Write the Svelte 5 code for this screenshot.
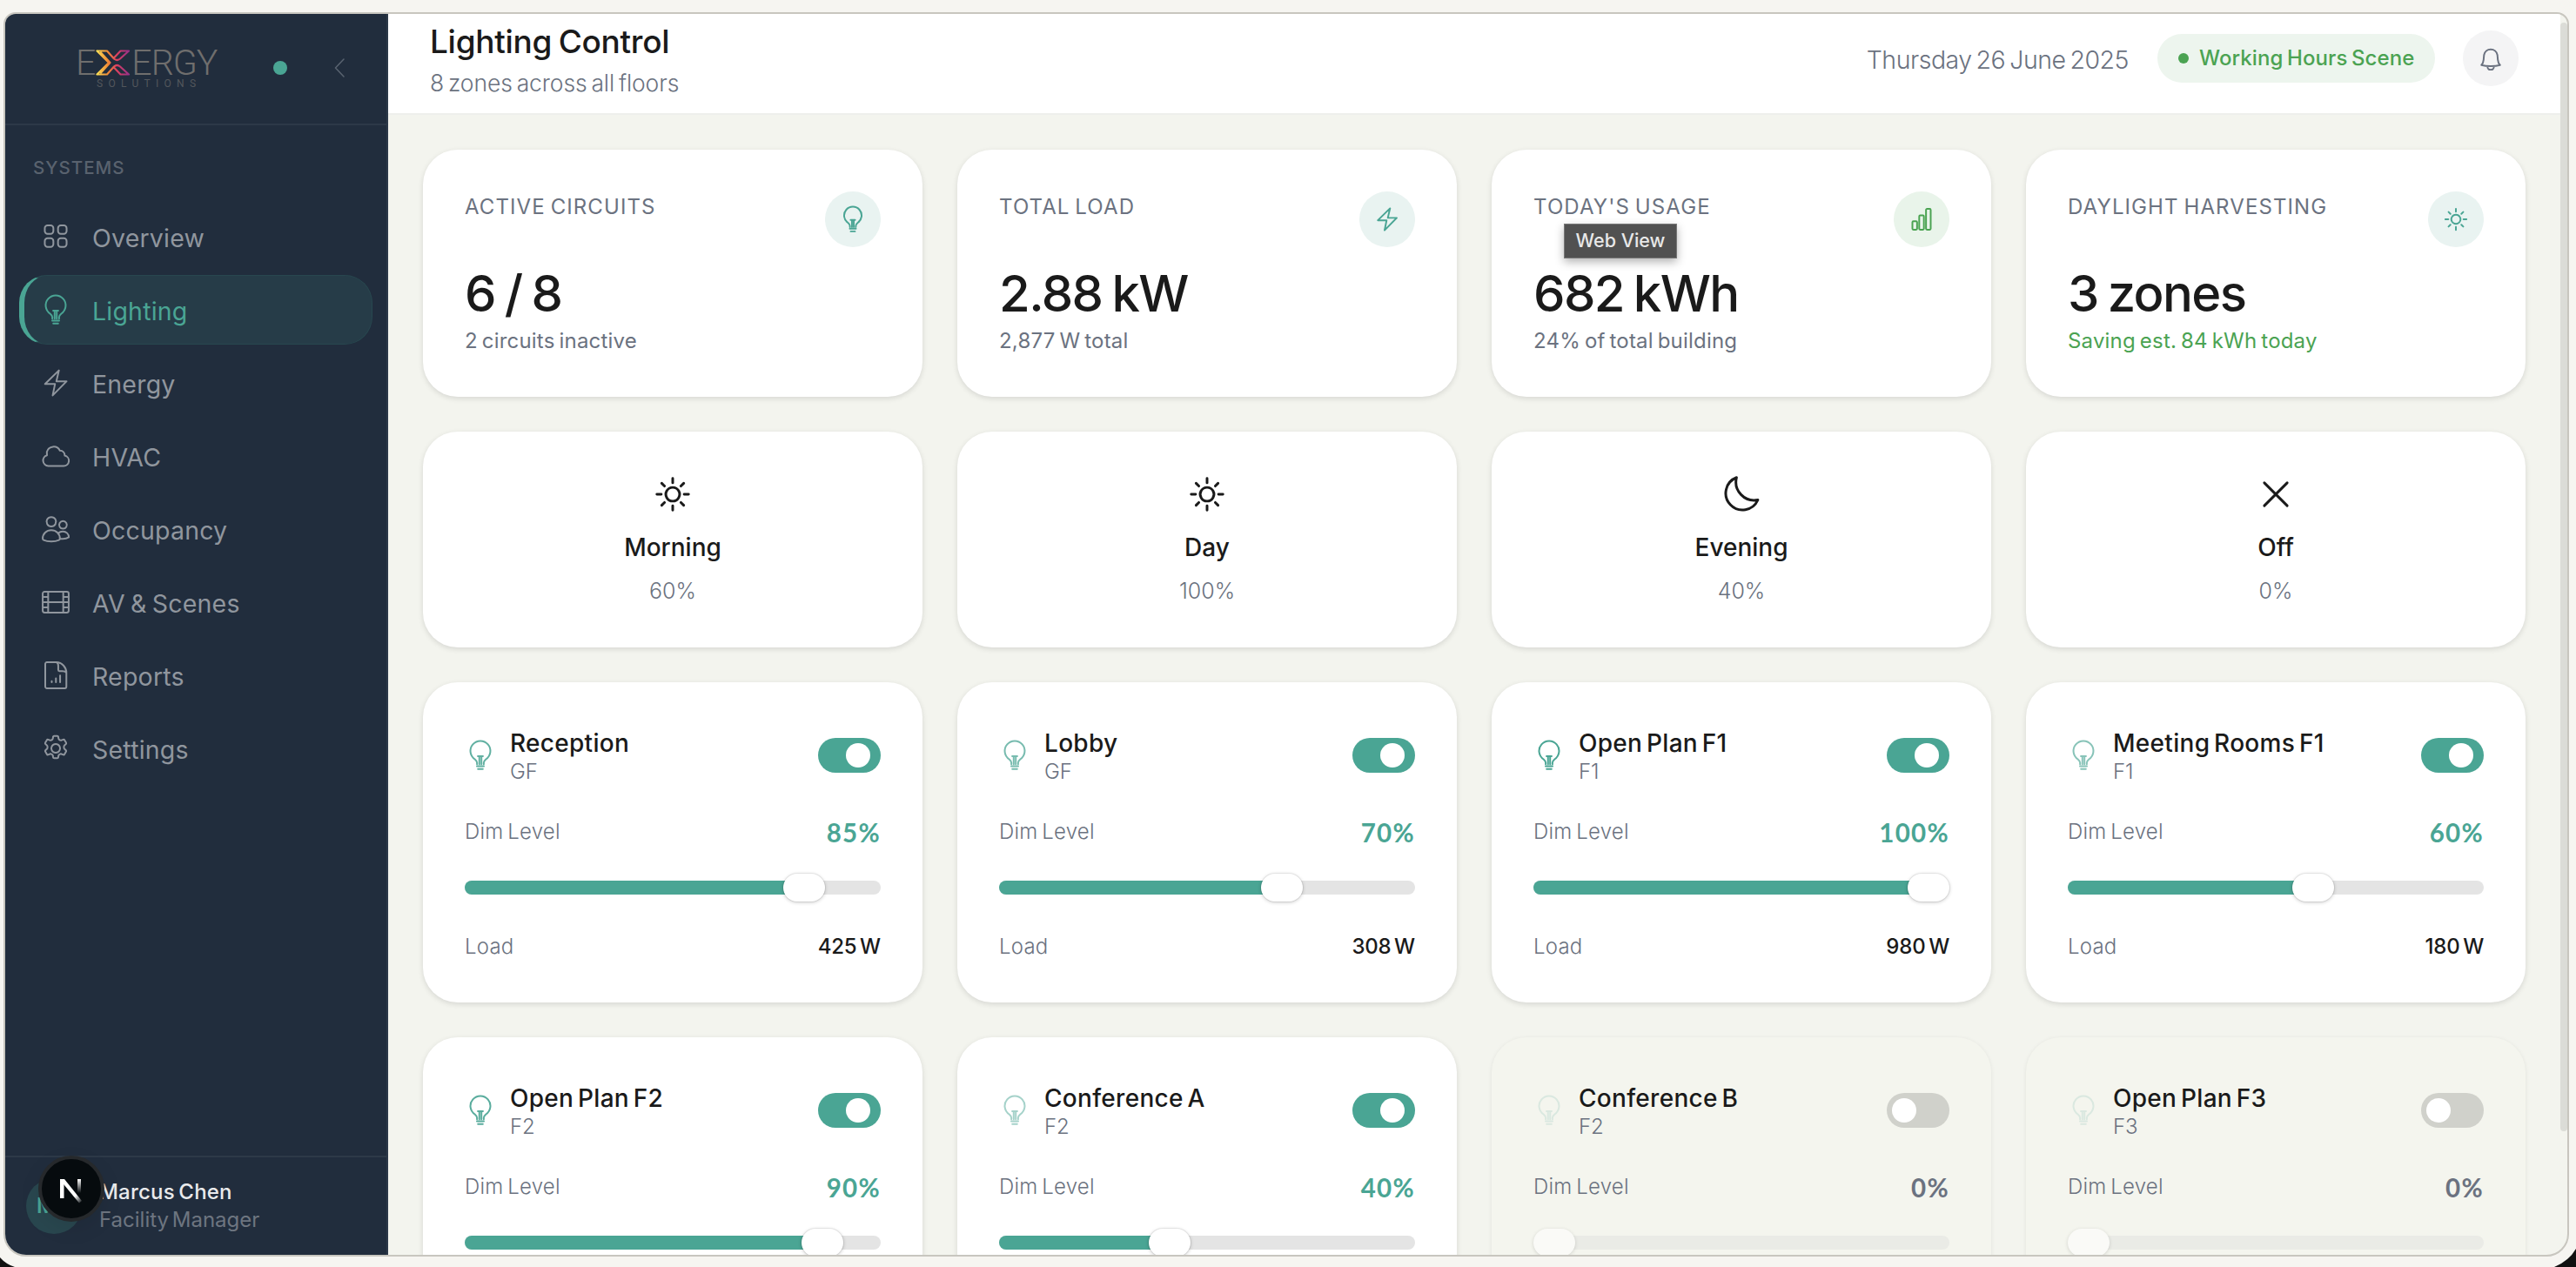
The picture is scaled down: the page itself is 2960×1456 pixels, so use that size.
<script>
    // Sidebar entries
    const navItems = [
        { name: "Overview", icon: "grid" },
        { name: "Lighting", icon: "bulb", active: true },
        { name: "Energy", icon: "bolt" },
        { name: "HVAC", icon: "cloud" },
        { name: "Occupancy", icon: "users" },
        { name: "AV & Scenes", icon: "film" },
        { name: "Reports", icon: "report" },
        { name: "Settings", icon: "gear" }
    ];

    const stats = [
        { label: "ACTIVE CIRCUITS", value: "6 / 8", note: "2 circuits inactive", icon: "bulb" },
        { label: "TOTAL LOAD", value: "2.88 kW", note: "2,877 W total", icon: "bolt" },
        { label: "TODAY'S USAGE", value: "682 kWh", note: "24% of total building", icon: "bars", green: true },
        { label: "DAYLIGHT HARVESTING", value: "3 zones", note: "Saving est. 84 kWh today", icon: "sun", saving: true }
    ];

    const scenes = [
        { name: "Morning", level: 60, icon: "sun" },
        { name: "Day", level: 100, icon: "sun" },
        { name: "Evening", level: 40, icon: "moon" },
        { name: "Off", level: 0, icon: "close" }
    ];

    let zones = [
        { name: "Reception", floor: "GF", dim: 85, load: 425, on: true },
        { name: "Lobby", floor: "GF", dim: 70, load: 308, on: true },
        { name: "Open Plan F1", floor: "F1", dim: 100, load: 980, on: true },
        { name: "Meeting Rooms F1", floor: "F1", dim: 60, load: 180, on: true },
        { name: "Open Plan F2", floor: "F2", dim: 90, load: 864, on: true },
        { name: "Conference A", floor: "F2", dim: 40, load: 120, on: true },
        { name: "Conference B", floor: "F2", dim: 0, load: 0, on: false },
        { name: "Open Plan F3", floor: "F3", dim: 0, load: 0, on: false }
    ];

    // Icon paths on a 24 x 24 grid
    const icons = {
        grid: "M5 2.2h2.6a2.4 2.4 0 0 1 2.4 2.4v2.6a2.4 2.4 0 0 1-2.4 2.4H5a2.4 2.4 0 0 1-2.4-2.4v-2.6A2.4 2.4 0 0 1 5 2.2zM16.4 2.2H19a2.4 2.4 0 0 1 2.4 2.4v2.6a2.4 2.4 0 0 1-2.4 2.4h-2.6a2.4 2.4 0 0 1-2.4-2.4v-2.6a2.4 2.4 0 0 1 2.4-2.4zM5 13.4h2.6a2.4 2.4 0 0 1 2.4 2.4v2.6a2.4 2.4 0 0 1-2.4 2.4H5a2.4 2.4 0 0 1-2.4-2.4v-2.6A2.4 2.4 0 0 1 5 13.4zM16.4 13.4H19a2.4 2.4 0 0 1 2.4 2.4v2.6a2.4 2.4 0 0 1-2.4 2.4h-2.6a2.4 2.4 0 0 1-2.4-2.4v-2.6a2.4 2.4 0 0 1 2.4-2.4z",
        bulb: "M9.1 19.6v-1.2c0-1.2-.8-2.1-1.9-3A8.6 8.6 0 1 1 16.8 15.4c-1.1.9-1.9 1.8-1.9 3v1.2M9.8 12.7h4.4M11.1 12.8v6.8M12.9 12.8v6.8M9 21.3h6M9.9 23.9h4.2",
        bolt: "M14.8 1.2L2.8 13h8.6L9.4 22.8 21.4 10.6h-8.8z",
        cloud: "M5.6 20.6h13.2a4.5 4.5 0 0 0 1-8.9c0-2.4-1.7-4.3-4.2-4.3A6 6 0 0 0 4.4 8.5c0 .9 0 1.7.1 2.9A4.7 4.7 0 0 0 5.6 20.6z",
        users: "M8.2 1.6a4.1 4.1 0 1 0 .01 0zM18.3 5.1a3.3 3.3 0 1 0 .01 0zM.8 20.2c0-4.2 3.2-7.2 7.4-7.2s7.4 3 7.4 7.2c0 .6-.3 1-.8 1.2-3.6 1.7-9.6 1.7-13.2 0-.5-.2-.8-.6-.8-1.2zM14.2 15.6c1-1 2.4-1.6 4-1.6 2.9 0 5.1 2.2 5.1 5.1-1.6 1-4.6 1.5-7.6 1.1",
        film: "M2.4 3h19.2a1.6 1.6 0 0 1 1.6 1.6v14.8a1.6 1.6 0 0 1-1.6 1.6H2.4a1.6 1.6 0 0 1-1.6-1.6V4.6A1.6 1.6 0 0 1 2.4 3zM5.5 3v18M18.5 3v18M5.5 12h13M.8 7.5h4.7M.8 12h4.7M.8 16.5h4.7M18.5 7.5h4.7M18.5 12h4.7M18.5 16.5h4.7",
        report: "M4.4.8h8.2c4.8 0 8.6 4.4 8.6 9v12a1.4 1.4 0 0 1-1.4 1.4H4.4a1.4 1.4 0 0 1-1.4-1.4V2.2A1.4 1.4 0 0 1 4.4.8zM13 1c1 .6 1.2 1.6 1.2 2.8v3.6a1 1 0 0 0 1 1h2.6c1.4 0 2.6.4 3.2 1.2M8.6 17v1M12.2 14.6v3.4M15.8 12.2v5.8",
        gear: "M12 8.2a3.8 3.8 0 1 0 .01 0zM10.6 1.4h2.8q.7 0 .8.7l.3 1.6q.1.7.8 1l.4.2q.6.4 1.3.1l1.6-.6q.7-.2 1 .4l1.4 2.4q.3.6-.2 1.1l-1.2 1q-.6.5-.5 1.2v.9q-.1.7.5 1.2l1.2 1q.5.5.2 1.1l-1.4 2.4q-.3.6-1 .4l-1.6-.6q-.7-.3-1.3.1l-.4.2q-.7.3-.8 1l-.3 1.6q-.1.7-.8.7h-2.8q-.7 0-.8-.7l-.3-1.6q-.1-.7-.8-1l-.4-.2q-.6-.4-1.3-.1l-1.6.6q-.7.2-1-.4l-1.4-2.4q-.3-.6.2-1.1l1.2-1q.6-.5.5-1.2v-.9q.1-.7-.5-1.2l-1.2-1q-.5-.5-.2-1.1l1.4-2.4q.3-.6 1-.4l1.6.6q.7.3 1.3-.1l.4-.2q.7-.3.8-1l.3-1.6q.1-.7.8-.7z",
        bars: "M4 14h2.6a1 1 0 0 1 1 1v6.2a1 1 0 0 1-1 1H4a1 1 0 0 1-1-1V15a1 1 0 0 1 1-1zM10.7 8.2h2.6a1 1 0 0 1 1 1v12a1 1 0 0 1-1 1h-2.6a1 1 0 0 1-1-1v-12a1 1 0 0 1 1-1zM17.4 1.8H20a1 1 0 0 1 1 1v18.4a1 1 0 0 1-1 1h-2.6a1 1 0 0 1-1-1V2.8a1 1 0 0 1 1-1z",
        sun: "M12 7.5a4.5 4.5 0 1 0 .01 0zM12 1.6v2.9M12 19.5v2.9M1.6 12h2.9M19.5 12h2.9M4.8 4.8l1.8 1.8M17.4 17.4l1.8 1.8M4.8 19.2l1.8-1.8M17.4 6.6l1.8-1.8",
        moon: "M8.8 1A12 12 0 0 0 22.8 15.7 11 11 0 1 1 8.8 1z",
        close: "M4.5 4.5l15 15M19.5 4.5l-15 15",
        bell: "M2.8 18.6c1.6-1.6 2-3 2.2-5.2l.4-4.6a6.7 6.7 0 0 1 13.2 0l.4 4.6c.2 2.2.6 3.6 2.2 5.2-5 1.6-13.4 1.6-18.4 0zM8.8 19.8v.4a3.2 3.2 0 0 0 6.4 0v-.4"
    };

    function toggleZone(zone) {
        zone.on = !zone.on;
        zones = zones;
    }
</script>

<svg class="desk" viewBox="0 0 2960 1456" aria-hidden="true">
    <path d="M0 1445Q7 1453 17 1456H0z" />
    <path d="M2960 1435Q2952 1449 2935 1456H2960z" />
</svg>

<div class="window">
    <aside class="sidebar">
        <div class="brand">
            <div class="logo">
                <div class="wordmark">
                    <span>E</span>
                    <svg class="mark" viewBox="0 0 40 30">
                        <defs>
                            <linearGradient id="warm" gradientUnits="userSpaceOnUse" x1="0" y1="0" x2="40" y2="0">
                                <stop offset="0" stop-color="#fbe85a" />
                                <stop offset="0.35" stop-color="#f08a35" />
                                <stop offset="0.6" stop-color="#dd3f60" />
                                <stop offset="1" stop-color="#8f2f8c" />
                            </linearGradient>
                        </defs>
                        <path d="M1.5 1.5H13L21 10.5q3.5 3 7 0L38 1.5H28.5L20.5 10M1.5 1.5L15 15 1.5 28.5H13L21 19.5q3.5-3 7 0L38 28.5H28.5L20.500 20M6 3.500L16.500 15 6 26.500" />
                    </svg>
                    <span>ERGY</span>
                </div>
                <div class="tagline">SOLUTIONS</div>
            </div>
            <span class="status"></span>
            <svg class="collapse" viewBox="0 0 12 22"><path d="M11 1L1.5 11 11 21" /></svg>
        </div>

        <div class="section">SYSTEMS</div>
        <nav>
            {#each navItems as item}
                <a href="#{item.icon}" class:active={item.active}>
                    <svg class="icon" viewBox="0 0 24 24"><path d={icons[item.icon]} /></svg>
                    <span>{item.name}</span>
                </a>
            {/each}
        </nav>

        <div class="user">
            <div class="avatar">MC</div>
            <div>
                <div class="user-name">Marcus Chen</div>
                <div class="user-role">Facility Manager</div>
            </div>
            <div class="dev-badge">
                <svg viewBox="0 0 40 40">
                    <defs>
                        <linearGradient id="fade-a" x1="0" y1="0" x2="1" y2="1">
                            <stop offset="0.7" stop-color="#fff" />
                            <stop offset="1" stop-color="#fff" stop-opacity="0" />
                        </linearGradient>
                        <linearGradient id="fade-b" x1="0" y1="0" x2="0" y2="1">
                            <stop offset="0" stop-color="#fff" />
                            <stop offset="1" stop-color="#fff" stop-opacity="0" />
                        </linearGradient>
                    </defs>
                    <rect x="7" y="9" width="4.5" height="22" fill="#fff" />
                    <path d="M7 9h5l20 25-3 2.5L7 10z" fill="url(#fade-a)" />
                    <rect x="27" y="9" width="4" height="16" fill="url(#fade-b)" />
                </svg>
            </div>
        </div>
    </aside>

    <main>
        <header>
            <div>
                <h1>Lighting Control</h1>
                <p class="subtitle">8 zones across all floors</p>
            </div>
            <div class="header-right">
                <span class="date">Thursday 26 June 2025</span>
                <span class="scene-pill"><i></i><span>Working Hours Scene</span></span>
                <button class="bell" aria-label="Notifications">
                    <svg viewBox="0 0 24 24"><path d={icons.bell} /></svg>
                </button>
            </div>
        </header>

        <div class="content">
            {#each stats as stat}
                <section class="card stat">
                    <div class="stat-top">
                        <span class="stat-label">{stat.label}</span>
                        <span class="stat-icon" class:green={stat.green}>
                            <svg viewBox="0 0 24 24"><path d={icons[stat.icon]} /></svg>
                        </span>
                    </div>
                    <div class="stat-value">{stat.value}</div>
                    <div class="stat-note" class:saving={stat.saving}>{stat.note}</div>
                    {#if stat.green}
                        <div class="tooltip">Web View</div>
                    {/if}
                </section>
            {/each}

            {#each scenes as scene}
                <section class="card scene">
                    <svg viewBox="0 0 24 24"><path d={icons[scene.icon]} /></svg>
                    <div class="scene-name">{scene.name}</div>
                    <div class="scene-level">{scene.level}%</div>
                </section>
            {/each}

            {#each zones as zone}
                <section class="card zone" class:off={!zone.on}>
                    <div class="zone-top">
                        <svg viewBox="0 0 24 24" style="opacity: {0.15 + zone.dim * 0.0085}"><path d={icons.bulb} /></svg>
                        <div class="zone-title">
                            <div class="zone-name">{zone.name}</div>
                            <div class="zone-floor">{zone.floor}</div>
                        </div>
                        <button class="toggle" aria-label="Toggle {zone.name}" on:click={() => toggleZone(zone)}><i></i></button>
                    </div>
                    <div class="row dim-row">
                        <span class="muted">Dim Level</span>
                        <span class="dim">{zone.dim}%</span>
                    </div>
                    <div class="slider" style="--level: {zone.dim / 100}">
                        <div class="fill"></div>
                        <div class="thumb"></div>
                    </div>
                    <div class="row load-row">
                        <span class="muted">Load</span>
                        <span class="load">{zone.load} W</span>
                    </div>
                </section>
            {/each}
        </div>
    </main>
    <div class="scrollbar"><div></div></div>
</div>

<style>
    :global(body) {
        background: #f6f5f1;
        overflow: hidden;
    }

    :global(#app) {
        font-family: Inter, "Liberation Sans", sans-serif;
        color: #1a1a1a;
        font-size: 24px;
        line-height: 32px;
    }

    svg path {
        fill: none;
        stroke: currentColor;
        stroke-width: 1.5;
        stroke-linecap: round;
        stroke-linejoin: round;
    }

    .desk {
        position: absolute;
        top: 0;
        left: 0;
        width: 2960px;
        height: 1456px;
    }

    .desk path {
        fill: #111;
        stroke: none;
    }

    .window {
        position: relative;
        display: flex;
        box-sizing: border-box;
        width: 2948px;
        height: 1430px;
        margin: 14px 0 0 4px;
        border: 2px solid #c8c6bf;
        border-radius: 14px 14px 26px 26px;
        background: #f3f4ee;
        overflow: hidden;
    }

    /* Sidebar */
    .sidebar {
        display: flex;
        flex-direction: column;
        flex: none;
        box-sizing: border-box;
        width: 440px;
        background: #212d3d;
        border-right: 2px solid #2b3848;
    }

    .brand {
        display: flex;
        align-items: center;
        box-sizing: border-box;
        height: 128px;
        padding: 0 48px 2px 81px;
        border-bottom: 2px solid #2d3948;
    }

    .logo {
        width: 163px;
    }

    .wordmark {
        display: flex;
        align-items: center;
        height: 30px;
        margin-top: 6px;
        color: #6f6e6d;
        font-family: Roboto, Inter, sans-serif;
        font-size: 41px;
        font-weight: 300;
        letter-spacing: -1px;
        line-height: 30px;
    }

    .mark {
        flex: none;
        width: 40px;
        height: 30px;
        margin: 0 1px 0 1px;
    }

    .mark path {
        stroke: url(#warm);
        stroke-width: 2.2;
    }

    .tagline {
        padding-left: 24px;
        color: #53575c;
        font-family: Roboto, Inter, sans-serif;
        font-size: 12px;
        letter-spacing: 6.3px;
        line-height: 18px;
    }

    .status {
        width: 16px;
        height: 16px;
        margin-left: 64px;
        border-radius: 50%;
        background: #4aa594;
    }

    .collapse {
        width: 12px;
        height: 22px;
        margin-left: auto;
        color: #596370;
    }

    .section {
        box-sizing: border-box;
        padding: 33px 0 0 32px;
        height: 88px;
        color: #59626e;
        font-size: 20.5px;
        font-weight: 500;
        letter-spacing: 1px;
    }

    nav {
        display: flex;
        flex-direction: column;
        gap: 4px;
        padding: 0 16px;
    }

    nav a {
        display: flex;
        align-items: center;
        gap: 26px;
        box-sizing: border-box;
        height: 80px;
        padding-left: 20px;
        border: 1px solid transparent;
        border-left: 6px solid transparent;
        border-radius: 32px;
        color: #90969e;
        font-size: 28.5px;
        letter-spacing: 0.2px;
        word-spacing: -2px;
        text-decoration: none;
    }

    nav a span {
        padding-top: 4px;
    }

    nav a.active {
        border-color: #28474f;
        border-left-color: #4aa594;
        background: #263c48;
        color: #4aa594;
    }

    .icon {
        width: 32px;
        height: 32px;
        overflow: visible;
    }

    .user {
        position: relative;
        display: flex;
        gap: 20px;
        box-sizing: border-box;
        height: 114px;
        margin-top: auto;
        padding: 24px;
        border-top: 2px solid #2d3948;
    }

    .avatar {
        width: 64px;
        height: 64px;
        border-radius: 50%;
        background: #29474f;
        color: #4aa594;
        font-weight: 600;
        line-height: 64px;
        text-align: center;
    }

    .user-name {
        color: #e9eaec;
        font-weight: 500;
        letter-spacing: 0.2px;
        word-spacing: -2px;
    }

    .user-role {
        color: #6d7580;
        word-spacing: -3px;
    }

    .dev-badge {
        position: absolute;
        left: 38px;
        top: -2px;
        box-sizing: border-box;
        width: 76px;
        height: 76px;
        border: 4px solid #26292c;
        border-radius: 50%;
        background: #060b0e;
        box-shadow: 0 8px 24px rgba(0, 0, 0, 0.08);
    }

    .dev-badge svg {
        width: 40px;
        height: 40px;
        margin: 14px;
    }

    .dev-badge svg path {
        fill: url(#fade-a);
        stroke: none;
    }

    /* Header */
    main {
        flex: 1;
        min-width: 0;
    }

    header {
        display: flex;
        justify-content: space-between;
        box-sizing: border-box;
        height: 116px;
        padding: 0 48px;
        border-bottom: 2px solid #eeefec;
        background: #fff;
    }

    h1 {
        margin: 8px 0 0;
        font-size: 37px;
        font-weight: 550;
        letter-spacing: -0.3px;
        word-spacing: -2px;
        line-height: 48px;
    }

    .subtitle {
        margin: 4px 0 0;
        color: #6b7280;
        font-size: 26.5px;
        font-weight: 350;
        letter-spacing: -0.1px;
        word-spacing: -2.5px;
        line-height: 38px;
    }

    .header-right {
        display: flex;
        align-items: center;
        height: 102px;
        color: #6b7280;
    }

    .date {
        margin: 4px 33px 0 0;
        font-size: 28.5px;
        font-weight: 350;
        letter-spacing: -0.5px;
        word-spacing: -2.5px;
    }

    .scene-pill {
        display: flex;
        align-items: center;
        gap: 12px;
        box-sizing: border-box;
        width: 319px;
        height: 56px;
        padding-left: 24px;
        border-radius: 28px;
        background: #edf5ee;
        color: #4ba352;
        font-weight: 500;
        letter-spacing: 0.1px;
        word-spacing: -2px;
        white-space: nowrap;
    }

    .scene-pill i {
        width: 12px;
        height: 12px;
        border-radius: 50%;
        background: #4ba352;
    }

    .bell {
        display: flex;
        align-items: center;
        justify-content: center;
        width: 64px;
        height: 64px;
        margin-left: 32px;
        padding: 0;
        border: 0;
        border-radius: 50%;
        background: #f4f4f5;
        color: #6b7280;
    }

    .bell svg {
        width: 28px;
        height: 28px;
    }

    .bell path {
        stroke-width: 1.7;
    }

    /* Cards */
    .content {
        display: grid;
        grid-template-columns: repeat(4, 1fr);
        gap: 40px;
        padding: 40px;
    }

    .card {
        position: relative;
        box-sizing: border-box;
        padding: 48px;
        border-radius: 40px;
        background: #fff;
        box-shadow: 0 2px 6px rgba(0, 0, 0, 0.12);
    }

    .stat {
        height: 284px;
    }

    .stat-top {
        display: flex;
        justify-content: space-between;
        height: 76px;
        color: #6b7280;
    }

    .stat-label {
        letter-spacing: 1.1px;
        word-spacing: -2px;
        line-height: 35px;
    }

    .stat-icon {
        display: flex;
        align-items: center;
        justify-content: center;
        width: 64px;
        height: 64px;
        border-radius: 50%;
        background: #e9f3f1;
        color: #4aa594;
    }

    .stat-icon.green {
        background: #e9f4ea;
        color: #4ba352;
    }

    .stat-icon svg {
        width: 28px;
        height: 28px;
        overflow: visible;
    }

    .stat-icon path {
        stroke-width: 1.7;
    }

    .stat-value {
        font-size: 58px;
        font-weight: 550;
        letter-spacing: -1.6px;
        word-spacing: -3px;
        line-height: 82px;
    }

    .stat-note {
        color: #6b7280;
        letter-spacing: 0.2px;
        word-spacing: -2px;
        line-height: 28px;
    }

    .stat-note.saving {
        color: #4ba352;
    }

    .tooltip {
        position: absolute;
        top: 85px;
        left: 83px;
        box-sizing: border-box;
        width: 130px;
        height: 40px;
        border: 1px solid #777;
        background: #515151;
        box-shadow: 0 4px 10px rgba(0, 0, 0, 0.3);
        color: #e8e8e8;
        font-size: 21.5px;
        font-weight: 500;
        line-height: 37px;
        text-align: center;
        white-space: nowrap;
    }

    .scene {
        display: flex;
        flex-direction: column;
        align-items: center;
        height: 248px;
    }

    .scene svg {
        width: 42px;
        height: 42px;
        margin-top: 3px;
    }

    .scene path {
        stroke-width: 1.7;
    }

    .scene-name {
        margin-top: 20px;
        font-size: 28px;
        font-weight: 550;
        line-height: 40px;
    }

    .scene-level {
        margin-top: 14px;
        color: #6b7280;
        font-size: 25px;
        font-weight: 300;
        line-height: 32px;
    }

    .zone {
        height: 368px;
    }

    .zone.off {
        background: #f4f5ee;
        box-shadow: 0 1px 5px rgba(0, 0, 0, 0.08);
    }

    .zone-top {
        display: flex;
        align-items: center;
        height: 72px;
    }

    .zone-top svg {
        width: 32px;
        height: 32px;
        margin: 0 2px;
        color: #4aa594;
        overflow: visible;
    }

    .zone-title {
        flex: 1;
        margin: 2px 0 0 16px;
    }

    .zone-name {
        font-size: 28px;
        font-weight: 550;
        letter-spacing: 0.3px;
        word-spacing: -3px;
        line-height: 36px;
    }

    .zone-floor {
        color: #6b7280;
        font-weight: 300;
        line-height: 30px;
    }

    .toggle {
        display: flex;
        justify-content: flex-end;
        align-items: center;
        width: 72px;
        height: 40px;
        padding: 0 12px;
        border: 0;
        border-radius: 20px;
        background: #4aa594;
    }

    .toggle i {
        width: 28px;
        height: 28px;
        border-radius: 50%;
        background: #fff;
    }

    .off .toggle {
        justify-content: flex-start;
        padding: 0 6px;
        background: #d0d1cb;
    }

    .row {
        display: flex;
        justify-content: space-between;
    }

    .dim-row {
        height: 60px;
        padding-top: 36px;
        box-sizing: border-box;
        margin-bottom: 48px;
    }

    .muted {
        color: #6b7280;
        font-weight: 300;
        letter-spacing: 0.2px;
        word-spacing: -2px;
    }

    .dim {
        margin-top: 1px;
        font-family: Lato, Inter, sans-serif;
        font-size: 29.5px;
        font-weight: 700;
        letter-spacing: 1.3px;
        color: #4aa594;
    }

    .off .dim {
        color: #6b7280;
    }

    .slider {
        position: relative;
        height: 16px;
        border-radius: 8px;
        background: #e4e4e4;
    }

    .fill {
        width: calc(24px + (100% - 48px) * var(--level));
        height: 16px;
        border-radius: 8px;
        background: #4aa594;
    }

    .thumb {
        position: absolute;
        top: -8px;
        left: calc((100% - 48px) * var(--level));
        width: 48px;
        height: 32px;
        border-radius: 16px;
        background: #fff;
        box-shadow: 0 0 0 1px rgba(0, 0, 0, 0.06), 0 1px 4px rgba(0, 0, 0, 0.22);
    }

    .off .slider {
        background: #eaebe6;
    }

    .off .fill {
        visibility: hidden;
    }

    .off .thumb {
        background: #fafaf7;
        box-shadow: 0 1px 4px rgba(0, 0, 0, 0.14);
    }

    .load-row {
        margin-top: 44px;
    }

    .load {
        font-weight: 550;
        letter-spacing: -0.2px;
        word-spacing: -2.5px;
    }

    .scrollbar {
        width: 8px;
        flex: none;
        padding-top: 10px;
        box-sizing: border-box;
    }

    .scrollbar div {
        height: 1274px;
        border-radius: 4px;
        background: #dbdcd7;
    }
</style>
